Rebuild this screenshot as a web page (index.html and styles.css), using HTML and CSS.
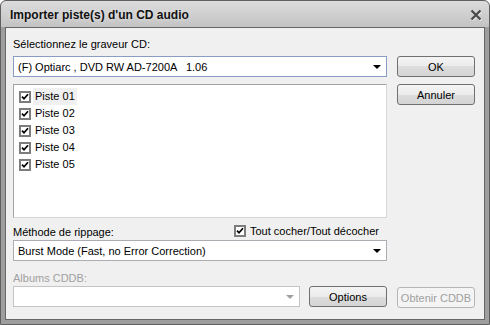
FILE: index.html
```html
<!DOCTYPE html>
<html lang="fr">
<head>
    <meta charset="UTF-8">
    <meta name="viewport" content="width=device-width, initial-scale=1.0">
    <title>Importer piste(s) d'un CD audio</title>
    <link rel="stylesheet" href="styles.css">
</head>
<body>
    <div class="window">
        <div class="titlebar">
            <span class="title">Importer piste(s) d'un CD audio</span>
            <svg class="close" width="12" height="12" viewBox="0 0 12 12">
                <path d="M1.5 1.5 L10.5 10.5 M10.5 1.5 L1.5 10.5" stroke="#f2f2f2" stroke-width="2.6" transform="translate(0.6 0.6)"/>
                <path d="M1.5 1.5 L10.5 10.5 M10.5 1.5 L1.5 10.5" stroke="#4a4a4a" stroke-width="2.4"/>
            </svg>
        </div>
        <div class="client">
            <div class="main">
                <div class="label">Sélectionnez le graveur CD:</div>
                <div class="combo focused">
                    <span class="combo-text">(F) Optiarc , DVD RW AD-7200A   1.06</span>
                    <i class="arrow"></i>
                </div>
                <div class="list">
                    <div class="item">
                        <span class="check"><svg viewBox="0 0 8 8"><path d="M1 3.6 L3 5.8 L7 1.2" stroke="#000" stroke-width="1.7" fill="none"/></svg></span>
                        <span class="item-text selected">Piste 01</span>
                    </div>
                    <div class="item">
                        <span class="check"><svg viewBox="0 0 8 8"><path d="M1 3.6 L3 5.8 L7 1.2" stroke="#000" stroke-width="1.7" fill="none"/></svg></span>
                        <span class="item-text">Piste 02</span>
                    </div>
                    <div class="item">
                        <span class="check"><svg viewBox="0 0 8 8"><path d="M1 3.6 L3 5.8 L7 1.2" stroke="#000" stroke-width="1.7" fill="none"/></svg></span>
                        <span class="item-text">Piste 03</span>
                    </div>
                    <div class="item">
                        <span class="check"><svg viewBox="0 0 8 8"><path d="M1 3.6 L3 5.8 L7 1.2" stroke="#000" stroke-width="1.7" fill="none"/></svg></span>
                        <span class="item-text">Piste 04</span>
                    </div>
                    <div class="item">
                        <span class="check"><svg viewBox="0 0 8 8"><path d="M1 3.6 L3 5.8 L7 1.2" stroke="#000" stroke-width="1.7" fill="none"/></svg></span>
                        <span class="item-text">Piste 05</span>
                    </div>
                </div>
                <div class="method-row">
                    <span class="label">Méthode de rippage:</span>
                    <span class="check-all">
                        <span class="check"><svg viewBox="0 0 8 8"><path d="M1 3.6 L3 5.8 L7 1.2" stroke="#000" stroke-width="1.7" fill="none"/></svg></span>
                        Tout cocher/Tout décocher
                    </span>
                </div>
                <div class="combo">
                    <span class="combo-text">Burst Mode (Fast, no Error Correction)</span>
                    <i class="arrow"></i>
                </div>
                <div class="label disabled">Albums CDDB:</div>
                <div class="cddb-row">
                    <div class="combo disabled">
                        <span class="combo-text"></span>
                        <i class="arrow"></i>
                    </div>
                    <button class="btn">Options</button>
                </div>
            </div>
            <div class="side">
                <button class="btn">OK</button>
                <button class="btn">Annuler</button>
                <button class="btn disabled bottom">Obtenir CDDB</button>
            </div>
        </div>
    </div>
</body>
</html>
```

FILE: styles.css
```css
body {
    margin: 0;
    font-family: "Liberation Sans", Arial, sans-serif;
    font-size: 11px;
    color: #000;
    background: #fff;
}
.window {
    width: 490px;
    height: 325px;
    box-sizing: border-box;
    border: 1px solid #5f5f5f;
    border-radius: 6px 6px 0 0;
    background: linear-gradient(to bottom, #dcdcdc 0, #c3c3c3 26px, #9e9e9e 26px, #9e9e9e 100%);
    display: flex;
    flex-direction: column;
}
.titlebar {
    height: 26px;
    display: flex;
    align-items: center;
    padding: 0 7px 0 9px;
}
.title {
    font-size: 12px;
    font-weight: bold;
    color: #111;
    margin-top: 2px;
    text-shadow: 0 0 4px rgba(255, 255, 255, 0.6);
}
.close {
    margin-left: auto;
    margin-top: 2px;
}
.client {
    flex: 1;
    margin: 0 4px 4px;
    border: 1px solid #666;
    background: #f0f0f0;
    display: flex;
    padding: 9px 9px 0 7px;
}
.main {
    width: 374px;
    display: flex;
    flex-direction: column;
}
.label {
    line-height: 14px;
    height: 14px;
}
.label.disabled {
    color: #a0a0a0;
    margin-top: 10px;
}
.combo {
    height: 21px;
    box-sizing: border-box;
    border: 1px solid #abadb3;
    background: #fff;
    display: flex;
    align-items: center;
    padding: 0 4px;
    margin-top: 1px;
}
.combo.focused {
    border-color: #8a9cc2;
    margin-top: 5px;
}
.combo-text {
    flex: 1;
    white-space: pre;
    padding-top: 1px;
}
.arrow {
    width: 0;
    height: 0;
    border-left: 4px solid transparent;
    border-right: 4px solid transparent;
    border-top: 4px solid #000;
    margin-right: 1px;
}
.combo.disabled {
    width: 287px;
    border-color: #c4c4c4;
}
.combo.disabled .arrow {
    border-top-color: #a0a0a0;
}
.list {
    margin-top: 7px;
    height: 134px;
    box-sizing: border-box;
    border: 1px solid;
    border-color: #a3a3a3 #d6d6d6 #d6d6d6 #a3a3a3;
    background: #fff;
    padding: 3px 0 0 5px;
}
.item {
    height: 17px;
    display: flex;
    align-items: center;
}
.check {
    width: 12px;
    height: 12px;
    box-sizing: border-box;
    border: 2px solid #7d7d7d;
    background: #fff;
    display: inline-flex;
    padding: 0;
}
.check svg {
    width: 8px;
    height: 8px;
}
.item-text {
    line-height: 17px;
    padding: 0 2px 0 2px;
    margin-left: 2px;
}
.item-text.selected {
    background: #f0f0f0;
}
.method-row {
    margin-top: 7px;
    display: flex;
    align-items: center;
    height: 14px;
}
.check-all {
    margin-left: auto;
    margin-right: 8px;
    display: flex;
    align-items: center;
    gap: 4px;
    margin-top: -2px;
}
.cddb-row {
    display: flex;
    align-items: flex-start;
    gap: 9px;
}
.cddb-row .btn {
    margin-top: 1px;
}
.side {
    margin-left: 10px;
    display: flex;
    flex-direction: column;
    padding-top: 19px;
    padding-bottom: 11px;
}
.btn {
    width: 78px;
    height: 21px;
    box-sizing: border-box;
    border: 1px solid #707070;
    border-radius: 3px;
    background: linear-gradient(to bottom, #f4f4f4 0, #ebebeb 50%, #dddddd 50%, #d4d4d4 100%);
    font-family: "Liberation Sans", Arial, sans-serif;
    font-size: 11px;
    color: #000;
    padding: 0;
    margin: 0;
}
.side .btn + .btn {
    margin-top: 7px;
}
.btn.disabled {
    border-color: #b5b5b5;
    background: #f4f4f4;
    color: #a0a0a0;
}
.side .btn.bottom {
    margin-top: auto;
}
```
